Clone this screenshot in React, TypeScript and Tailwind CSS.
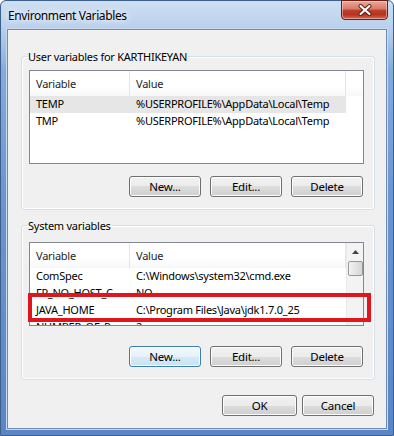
import React from 'react';

type Row = { name: string; value: string };

const userRows: Row[] = [
  { name: 'TEMP', value: '%USERPROFILE%\\AppData\\Local\\Temp' },
  { name: 'TMP', value: '%USERPROFILE%\\AppData\\Local\\Temp' },
];

const systemRows: Row[] = [
  { name: 'ComSpec', value: 'C:\\Windows\\system32\\cmd.exe' },
  { name: 'FP_NO_HOST_C...', value: 'NO' },
  { name: 'JAVA_HOME', value: 'C:\\Program Files\\Java\\jdk1.7.0_25' },
  { name: 'NUMBER_OF_P...', value: '2' },
];

const Button = ({ label, width, primary }: { label: string; width: string; primary?: boolean }) => (
  <button
    className={`${width} h-[21px] rounded-[3px] border text-[11.5px] text-black leading-none ${
      primary
        ? 'border-[#3c7fb1] bg-[linear-gradient(180deg,#f3f9fd_0%,#e6f2fb_50%,#d5eaf8_50%,#c9e3f6_100%)] shadow-[inset_0_0_0_1px_#ffffff]'
        : 'border-[#707070] bg-[linear-gradient(180deg,#f2f2f2_0%,#ebebeb_50%,#dddddd_50%,#cfcfcf_100%)] shadow-[inset_0_0_0_1px_#fcfcfc]'
    }`}
  >
    {label}
  </button>
);

const ListView = ({
  rows,
  height,
  selected,
  scrollbar,
}: {
  rows: Row[];
  height: string;
  selected?: number;
  scrollbar?: boolean;
}) => (
  <div className={`${height} border border-[#828790] bg-white flex overflow-hidden`}>
    <div className="w-[316px] flex flex-col">
      {/* header */}
      <div className="h-[25px] shrink-0 flex bg-[linear-gradient(180deg,#ffffff_0%,#ffffff_60%,#f7f8fa_100%)] text-[#1e1e1e]">
        <div className="w-[100px] pl-[6px] pt-[5px] border-r border-[#e3e5e8]">Variable</div>
        <div className="flex-1 pl-[6px] pt-[5px] border-r border-[#e3e5e8]">Value</div>
      </div>
      {rows.map((r, i) => (
        <div
          key={r.name}
          className={`h-[17px] shrink-0 flex items-center text-black whitespace-nowrap ${
            i === selected ? 'bg-[#e6e6e6]' : ''
          }`}
        >
          <div className="w-[100px] pl-[6px]">{r.name}</div>
          <div className="flex-1 pl-[6px]">{r.value}</div>
        </div>
      ))}
    </div>
    {scrollbar ? (
      <div className="w-[17px] bg-[#f3f3f3] border-l border-[#eaeaea] flex flex-col items-center">
        <div className="h-[18px] flex items-center justify-center">
          <svg width="7" height="4" viewBox="0 0 7 4">
            <path d="M0 4 L3.5 0 L7 4 Z" fill="#444" />
          </svg>
        </div>
        <div className="w-[15px] h-[15px] rounded-[2px] border border-[#979797] bg-[linear-gradient(90deg,#f3f3f3,#e4e4e4_50%,#d6d6d6)]" />
      </div>
    ) : (
      <div className="flex-1 flex flex-col">
        <div className="h-[25px] bg-[linear-gradient(180deg,#ffffff_0%,#ffffff_60%,#f7f8fa_100%)]" />
      </div>
    )}
  </div>
);

const GroupBox = ({ title, children }: { title: string; children: React.ReactNode }) => (
  <fieldset className="border border-[#d5dfe5] rounded-[3px] shadow-[inset_0_0_0_1px_#ffffff] px-0 pb-[12px]">
    <legend className="ml-[5px] px-[1px] leading-[15px] text-black">{title}</legend>
    <div className="pl-[7px] pr-[10px]">{children}</div>
  </fieldset>
);

export default function App() {
  return (
    <div className="relative w-[394px] h-[436px] overflow-hidden bg-white font-['Segoe_UI','Noto_Sans',sans-serif] text-[11px] tracking-[-0.25px]">
      <div className="h-full flex flex-col rounded-t-[6px] border border-[#3d5f8c] bg-[linear-gradient(180deg,#cfdff2_0px,#b8cfec_28px,#85abdb_70px,#6a95cf_200px,#5a86c5_100%)]">
        {/* title bar */}
        <div className="h-[28px] shrink-0 flex items-start">
          <div className="pl-[7px] pt-[6px] text-[12px] tracking-[-0.4px] text-black [text-shadow:0_0_6px_#ffffff,0_0_10px_#ffffff]">
            Environment Variables
          </div>
          <div className="ml-auto mr-[5px] -mt-[1px] w-[47px] h-[20px] rounded-b-[4px] border border-[#6b1d13] bg-[linear-gradient(180deg,#e9a99a_0%,#d77a68_45%,#c1402e_50%,#b7321f_75%,#d36b55_100%)] shadow-[inset_0_0_0_1px_rgba(255,220,210,0.5)] flex items-center justify-center">
            <svg width="14" height="12" viewBox="0 0 14 12">
              <path d="M2.5 2 L11.5 10 M11.5 2 L2.5 10" stroke="#5a1a10" strokeWidth="4" strokeLinecap="round" />
              <path d="M2.5 2 L11.5 10 M11.5 2 L2.5 10" stroke="#ffffff" strokeWidth="2.2" strokeLinecap="round" />
            </svg>
          </div>
        </div>

        {/* client area */}
        <div className="flex-1 mx-[6px] mb-[6px] bg-[#f0f0f0] border border-[#6d8bb3] shadow-[0_0_0_1px_#c9daee] flex flex-col pl-[13px] pr-[11px]">
          <div className="mt-[19px]">
            <GroupBox title="User variables for KARTHIKEYAN">
              <div className="pt-[6px]">
                <ListView rows={userRows} height="h-[94px]" selected={0} />
              </div>
              <div className="mt-[12px] flex justify-end gap-[9px] pr-[1px]">
                <Button label="New..." width="w-[72px]" />
                <Button label="Edit..." width="w-[72px]" />
                <Button label="Delete" width="w-[72px]" />
              </div>
            </GroupBox>
          </div>

          <div className="mt-[8px]">
            <GroupBox title="System variables">
              <div className="pt-[9px]">
                <ListView rows={systemRows} height="h-[84px]" scrollbar />
              </div>
              <div className="mt-[20px] flex justify-end gap-[9px] pr-[1px]">
                <Button label="New..." width="w-[72px]" primary />
                <Button label="Edit..." width="w-[72px]" />
                <Button label="Delete" width="w-[72px]" />
              </div>
            </GroupBox>
          </div>

          <div className="mt-[15px] flex justify-end gap-[5px] pr-[1px]">
            <Button label="OK" width="w-[75px]" />
            <Button label="Cancel" width="w-[72px]" />
          </div>
        </div>
      </div>

      {/* red annotation box */}
      <div className="absolute left-[28px] top-[293px] w-[343px] h-[29px] border-[4px] border-[#e0161e]" />
    </div>
  );
}
